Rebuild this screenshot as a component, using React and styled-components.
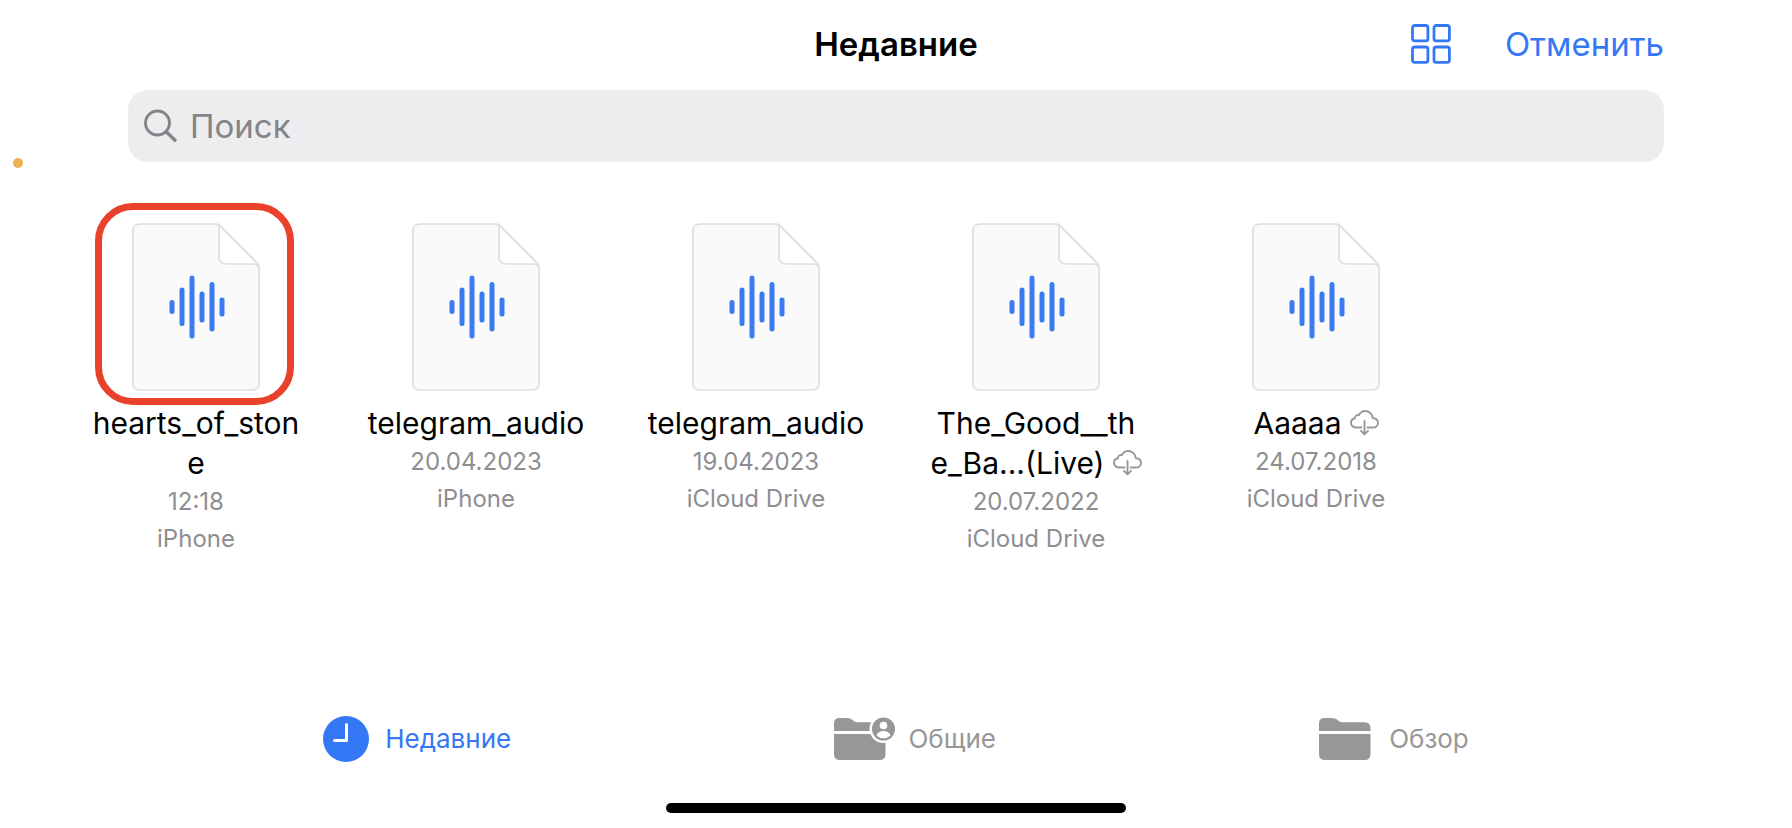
import React from "react";
import styled, { createGlobalStyle } from "styled-components";

const BLUE = "#3478f6";
const GREY = "#8e8e92";

const GlobalStyle = createGlobalStyle`
  *, *::before, *::after { box-sizing: border-box; }
  body {
    margin: 0;
    background: #fff;
    color: #000;
    font-family: Inter, "Liberation Sans", sans-serif;
  }
  button { font: inherit; border: 0; padding: 0; background: none; cursor: pointer; }
`;

const Page = styled.div`
  position: relative;
  min-height: 100vh;
  display: flex;
  flex-direction: column;
`;

const RecordingDot = styled.span`
  position: absolute;
  top: 158px;
  left: 13px;
  width: 10px;
  height: 10px;
  border-radius: 50%;
  background: #efb052;
`;

const Header = styled.header`
  display: grid;
  grid-template-columns: 1fr auto 1fr;
  align-items: center;
  height: 90px;
  padding: 0 128px 2px;
`;

const Title = styled.h1`
  grid-column: 2;
  margin: 0;
  font-size: 33px;
  font-weight: 600;
  line-height: 40px;
`;

const Actions = styled.div`
  display: flex;
  justify-content: flex-end;
  align-items: center;
  gap: 54px;
`;

const ViewButton = styled.button`
  display: flex;
`;

const CancelButton = styled.button`
  color: ${BLUE};
  font-size: 33px;
  line-height: 40px;
`;

const SearchField = styled.label`
  display: flex;
  align-items: center;
  gap: 12px;
  height: 72px;
  margin: 0 128px;
  padding: 0 16px;
  border-radius: 20px;
  background: #ededef;
`;

const SearchInput = styled.input`
  flex: 1;
  min-width: 0;
  border: 0;
  padding: 0;
  outline: 0;
  background: none;
  font: inherit;
  font-size: 33px;
  line-height: 40px;
  &::placeholder { color: #848488; opacity: 1; }
`;

const Files = styled.ul`
  flex: 1;
  display: grid;
  grid-template-columns: repeat(auto-fill, 280px);
  align-content: start;
  list-style: none;
  margin: 0;
  padding: 61px 56px 24px;
`;

const FileItem = styled.li`
  display: flex;
  flex-direction: column;
  align-items: center;
  text-align: center;
`;

const FileButton = styled.button`
  position: relative;
  display: flex;
  margin-bottom: 12px;
`;

const Highlight = styled.span`
  position: absolute;
  inset: -20px -34px -14px -37px;
  border: 7px solid #e8432a;
  border-radius: 38px;
`;

const FileName = styled.span`
  font-size: 30px;
  line-height: 40px;
`;

const NameLine = styled.span`
  display: flex;
  justify-content: center;
  align-items: center;
  gap: 8px;
`;

const Meta = styled.span`
  color: ${GREY};
  font-size: 24px;
  line-height: 37px;
`;

const TabBar = styled.nav`
  display: flex;
  justify-content: space-evenly;
  align-items: center;
  height: 48px;
`;

const Tab = styled.button`
  display: flex;
  align-items: center;
  gap: ${(p) => p.$gap}px;
  color: ${(p) => (p.$active ? BLUE : "#979797")};
  font-size: 26px;
  line-height: 32px;
`;

const HomeIndicator = styled.div`
  width: 460px;
  height: 10px;
  margin: 40px auto 15px;
  border-radius: 5px;
  background: #000;
`;

const GridIcon = () => (
  <svg width="40" height="40" viewBox="0 0 40 40" fill="none" stroke={BLUE} strokeWidth="2.8" aria-hidden="true">
    <rect x="1.5" y="1.5" width="15.4" height="15.4" rx="2.2" />
    <rect x="23" y="1.5" width="15.4" height="15.4" rx="2.2" />
    <rect x="1.5" y="23" width="15.4" height="15.4" rx="2.2" />
    <rect x="23" y="23" width="15.4" height="15.4" rx="2.2" />
  </svg>
);

const SearchIcon = () => (
  <svg width="34" height="34" viewBox="0 0 34 34" fill="none" stroke="#848488" strokeLinecap="round" aria-hidden="true">
    <circle cx="13.5" cy="14" r="12" strokeWidth="2.8" />
    <path d="M22.5 23L31 31.3" strokeWidth="3.4" />
  </svg>
);

const AudioFileIcon = () => (
  <svg width="128" height="168" viewBox="0 0 128 168" fill="none" aria-hidden="true">
    <path
      d="M8 1H83Q86 1 88 3L125 40Q127 42 127 45V160Q127 167 120 167H8Q1 167 1 160V8Q1 1 8 1Z"
      fill="#fafafa" stroke="#dfdfe0" strokeWidth="1.7"
    />
    <path d="M87 2V33Q87 41 95 41H125Z" fill="#fff" />
    <path d="M87 2.5V33Q87 41 95 41H121Q126 41 127 45M85 1.2Q87 1.5 88 3L126 41" stroke="#dfdfe0" strokeWidth="1.7" />
    <path
      d="M40 79.500V88.500M50 67V100.500M60 55V113M70 71V97M80 61.500V106M90 77V91"
      stroke="#3b7bf0" strokeWidth="5" strokeLinecap="round"
    />
  </svg>
);

const CloudIcon = () => (
  <svg width="29" height="26" viewBox="0 0 29 26" fill="none" stroke="#98989c" strokeWidth="1.9" strokeLinecap="round" strokeLinejoin="round" role="img" aria-label="iCloud">
    <path d="M11.500 17.500H6.500C3.200 17.500 1 15.500 1 12.800C1 10.300 2.800 8.700 5 8.300C4.800 6 6.500 4.600 8.900 5C10.200 2.500 12.300 1 15.200 1C19.500 1 22.500 4.200 22.700 8C26 8.400 28 10.300 28 12.900C28 15.600 25.900 17.500 22.800 17.500H17.500" />
    <path d="M14.500 11V24M11 20.800L14.500 24.300L18 20.800" />
  </svg>
);

const ClockIcon = () => (
  <svg width="46" height="46" viewBox="0 0 46 46" aria-hidden="true">
    <circle cx="23" cy="23" r="23" fill={BLUE} />
    <path d="M23.500 8.500V24.500H11.500" fill="none" stroke="#fff" strokeWidth="3" strokeLinecap="round" strokeLinejoin="round" />
  </svg>
);

const FolderShape = () => (
  <>
    <path d="M0 14V6.500Q0 1 5.500 1H13.500Q16 1 18 2.600L20 4.200Q21.500 5.300 24 5.300H45.500Q51.500 5.300 51.500 11.500V14Z" />
    <path d="M0 17H51.500V37Q51.500 43 45.500 43H6Q0 43 0 37Z" />
  </>
);

const FolderIcon = () => (
  <svg width="52" height="44" viewBox="0 0 52 44" fill="#979797" aria-hidden="true">
    <FolderShape />
  </svg>
);

const SharedFolderIcon = () => (
  <svg width="62" height="44" viewBox="0 0 62 44" fill="#979797" aria-hidden="true">
    <FolderShape />
    <circle cx="49.500" cy="12" r="14" fill="#fff" />
    <circle cx="49.500" cy="12" r="11.500" />
    <circle cx="49.500" cy="8.500" r="3.800" fill="#fff" />
    <path d="M42.500 18.500Q44 14 49.500 14T56.500 18.500Q53.500 21.300 49.500 21.300T42.500 18.500Z" fill="#fff" />
  </svg>
);

const files = [
  { lines: ["hearts_of_ston", "e"], date: "12:18", place: "iPhone", selected: true },
  { lines: ["telegram_audio"], date: "20.04.2023", place: "iPhone" },
  { lines: ["telegram_audio"], date: "19.04.2023", place: "iCloud Drive" },
  { lines: ["The_Good__th", "e_Ba...(Live)"], date: "20.07.2022", place: "iCloud Drive", remote: true },
  { lines: ["Aaaaa"], date: "24.07.2018", place: "iCloud Drive", remote: true },
];

const File = ({ file }) => (
  <FileItem>
    <FileButton type="button" aria-label={file.lines.join("")}>
      <AudioFileIcon />
      {file.selected && <Highlight />}
    </FileButton>
    <FileName>
      {file.lines.map((line, i) => (
        <NameLine key={line}>
          {line}
          {file.remote && i === file.lines.length - 1 && <CloudIcon />}
        </NameLine>
      ))}
    </FileName>
    <Meta>{file.date}</Meta>
    <Meta>{file.place}</Meta>
  </FileItem>
);

export default function App() {
  return (
    <Page>
      <GlobalStyle />
      <RecordingDot />
      <Header>
        <Title>Недавние</Title>
        <Actions>
          <ViewButton type="button" aria-label="Вид"><GridIcon /></ViewButton>
          <CancelButton type="button">Отменить</CancelButton>
        </Actions>
      </Header>
      <SearchField>
        <SearchIcon />
        <SearchInput type="search" placeholder="Поиск" aria-label="Поиск" />
      </SearchField>
      <Files>
        {files.map((file, i) => <File key={i} file={file} />)}
      </Files>
      <TabBar>
        <Tab type="button" $active $gap={16}><ClockIcon />Недавние</Tab>
        <Tab type="button" $gap={12}><SharedFolderIcon />Общие</Tab>
        <Tab type="button" $gap={18}><FolderIcon />Обзор</Tab>
      </TabBar>
      <HomeIndicator />
    </Page>
  );
}
